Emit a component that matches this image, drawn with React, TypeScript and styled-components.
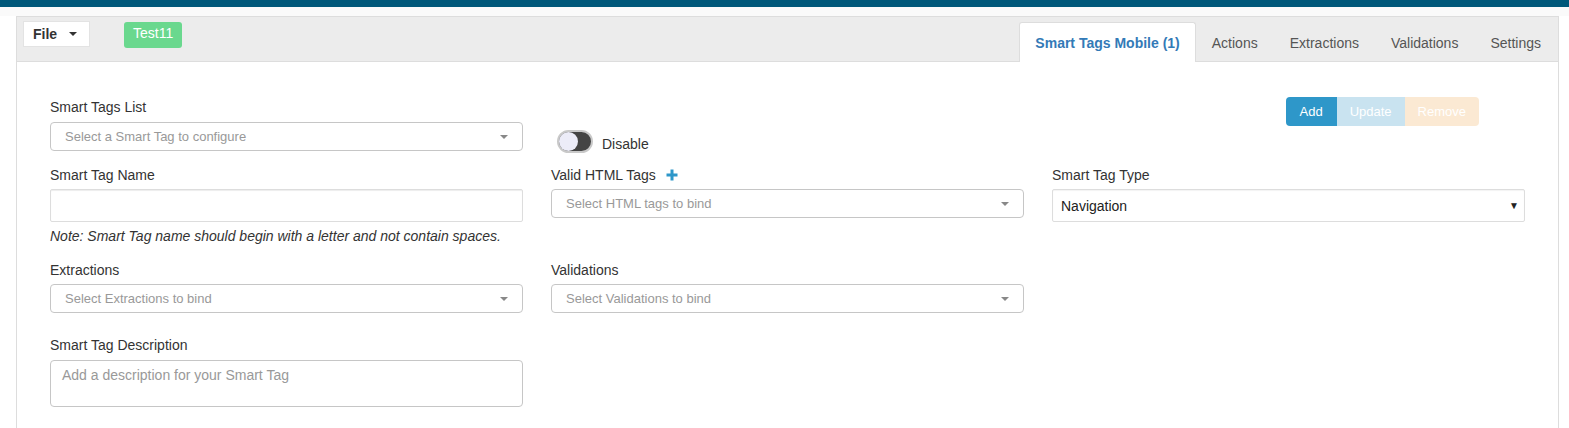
import React from "react";
import styled, { createGlobalStyle } from "styled-components";

const GlobalStyle = createGlobalStyle`
  html, body {
    margin: 0;
    padding: 0;
    background: #fff;
    font-family: "Liberation Sans", Arial, sans-serif;
    font-size: 14px;
    color: #333;
  }
  * {
    box-sizing: border-box;
  }
`;

const TopBar = styled.div`
  height: 7px;
  background: #00587a;
`;

const Strip = styled.div`
  height: 9px;
  background: #fafafa;
`;

const Panel = styled.div`
  margin-left: 16px;
  width: 1543px;
  border: 1px solid #ddd;
  border-bottom: none;
  min-height: 420px;
`;

const Header = styled.div`
  height: 45px;
  background: #ececec;
  border-bottom: 1px solid #ddd;
  display: flex;
  align-items: flex-start;
  padding-left: 6px;
  padding-right: 1px;
`;

const FileButton = styled.div`
  margin-top: 4px;
  width: 67px;
  height: 26px;
  background: #fff;
  border: 1px solid #e3e3e3;
  display: flex;
  align-items: center;
  padding-left: 9px;
  font-weight: bold;
  font-size: 14px;
  color: #333;
`;

const Caret = styled.span`
  margin-left: 12px;
  width: 0;
  height: 0;
  border-left: 4px solid transparent;
  border-right: 4px solid transparent;
  border-top: 4px solid #333;
`;

const Badge = styled.div`
  margin-top: 5px;
  margin-left: 34px;
  height: 26px;
  padding: 2px 9px 0;
  line-height: 18px;
  background: #6ad88e;
  color: #fff;
  border-radius: 3px;
  font-size: 14px;
`;

const Tabs = styled.div`
  margin-left: auto;
  display: flex;
  align-self: flex-end;
  margin-bottom: -1px;
`;

const Tab = styled.div<{ $active?: boolean }>`
  height: 40px;
  padding: 10px 15px;
  line-height: 20px;
  font-size: 14px;
  border: 1px solid ${({ $active }) => ($active ? "#ddd" : "transparent")};
  border-bottom: none;
  background: ${({ $active }) => ($active ? "#fff" : "transparent")};
  color: ${({ $active }) => ($active ? "#337ab7" : "#555")};
  font-weight: ${({ $active }) => ($active ? "bold" : "normal")};
  border-radius: 3px 3px 0 0;
`;

const Body = styled.div`
  padding: 35px 0 0 33px;
`;

const Row = styled.div<{ $top?: number }>`
  display: grid;
  grid-template-columns: 473px 473px 473px;
  column-gap: 28px;
  align-items: start;
  margin-top: ${({ $top }) => $top || 0}px;
`;

const Field = styled.div`
  display: flex;
  flex-direction: column;
`;

const Label = styled.div<{ $gap?: number }>`
  height: 20px;
  line-height: 20px;
  font-size: 14px;
  color: #333;
  margin-bottom: ${({ $gap }) => ($gap === undefined ? 4 : $gap)}px;
  display: flex;
  align-items: center;
`;

const PlusIcon = styled.svg`
  margin-left: 10px;
  width: 12px;
  height: 12px;
`;

const Select2 = styled.div`
  height: 29px;
  border: 1px solid #c6c6c6;
  border-radius: 4px;
  display: flex;
  align-items: center;
  padding: 0 14px 0 14px;
  font-size: 13px;
  color: #999;
  background: #fff;
`;

const Arrow = styled.span`
  margin-left: auto;
  width: 0;
  height: 0;
  border-left: 4px solid transparent;
  border-right: 4px solid transparent;
  border-top: 4px solid #888;
`;

const TextInput = styled.div`
  height: 33px;
  border: 1px solid #ddd;
  border-radius: 2px;
  box-shadow: inset 0 1px 1px rgba(0, 0, 0, 0.075);
  background: #fff;
`;

const NativeSelect = styled.div`
  height: 33px;
  border: 1px solid #ddd;
  border-radius: 2px;
  box-shadow: inset 0 1px 1px rgba(0, 0, 0, 0.05);
  display: flex;
  align-items: center;
  padding: 0 5px 0 8px;
  font-size: 14px;
  color: #222;
  background: #fff;
`;

const SmallTriangle = styled.span`
  margin-left: auto;
  font-size: 10px;
  color: #222;
`;

const Note = styled.div`
  margin-top: 4px;
  line-height: 20px;
  font-style: italic;
  font-size: 14px;
  color: #333;
`;

const TextArea = styled.div`
  height: 47px;
  border: 1px solid #c6c6c6;
  border-radius: 4px;
  padding: 5px 11px;
  line-height: 18px;
  font-size: 14px;
  color: #999;
  background: #fff;
`;

const ToggleWrap = styled.div`
  margin-top: 33px;
  margin-left: 6px;
  display: flex;
  align-items: center;
  gap: 9px;
  font-size: 14px;
  color: #333;

  & > span:last-child {
    margin-top: 4px;
  }
`;

const Switch = styled.span`
  position: relative;
  width: 36px;
  height: 23px;
  border-radius: 12px;
  background: #444;
  border: 2px solid #c9c9c9;

  &::after {
    content: "";
    position: absolute;
    left: 0;
    top: 0;
    width: 19px;
    height: 19px;
    border-radius: 50%;
    background: #ececf8;
  }
`;

const ButtonGroup = styled.div`
  justify-self: end;
  margin-right: 46px;
  display: flex;
`;

const Button = styled.div<{ $bg: string }>`
  height: 29px;
  line-height: 29px;
  padding: 0 13px;
  background: ${({ $bg }) => $bg};
  color: #fff;
  font-size: 13px;

  &:first-child {
    border-radius: 4px 0 0 4px;
    padding: 0 14px;
  }
  &:last-child {
    border-radius: 0 4px 4px 0;
  }
`;

const Empty = styled.div``;

export default function App() {
  return (
    <>
      <GlobalStyle />
      <TopBar />
      <Strip />
      <Panel>
        <Header>
          <FileButton>
            File
            <Caret />
          </FileButton>
          <Badge>Test11</Badge>
          <Tabs>
            <Tab $active>Smart Tags Mobile (1)</Tab>
            <Tab>Actions</Tab>
            <Tab>Extractions</Tab>
            <Tab>Validations</Tab>
            <Tab>Settings</Tab>
          </Tabs>
        </Header>
        <Body>
          <Row>
            <Field>
              <Label $gap={5}>Smart Tags List</Label>
              <Select2>
                Select a Smart Tag to configure
                <Arrow />
              </Select2>
            </Field>
            <ToggleWrap>
              <Switch />
              <span>Disable</span>
            </ToggleWrap>
            <ButtonGroup>
              <Button $bg="#2e97c9">Add</Button>
              <Button $bg="#c9e3f0">Update</Button>
              <Button $bg="#fbe9d3">Remove</Button>
            </ButtonGroup>
          </Row>
          <Row $top={12}>
            <Field>
              <Label>Smart Tag Name</Label>
              <TextInput />
              <Note>Note: Smart Tag name should begin with a letter and not contain spaces.</Note>
            </Field>
            <Field>
              <Label>
                Valid HTML Tags
                <PlusIcon viewBox="0 0 12 12">
                  <path d="M6 0.5V11.5M0.5 6H11.5" stroke="#2e97c9" strokeWidth="3" />
                </PlusIcon>
              </Label>
              <Select2>
                Select HTML tags to bind
                <Arrow />
              </Select2>
            </Field>
            <Field>
              <Label>Smart Tag Type</Label>
              <NativeSelect>
                Navigation
                <SmallTriangle>▼</SmallTriangle>
              </NativeSelect>
            </Field>
          </Row>
          <Row $top={14}>
            <Field>
              <Label>Extractions</Label>
              <Select2>
                Select Extractions to bind
                <Arrow />
              </Select2>
            </Field>
            <Field>
              <Label>Validations</Label>
              <Select2>
                Select Validations to bind
                <Arrow />
              </Select2>
            </Field>
            <Empty />
          </Row>
          <Row $top={22}>
            <Field>
              <Label $gap={5}>Smart Tag Description</Label>
              <TextArea>Add a description for your Smart Tag</TextArea>
            </Field>
          </Row>
        </Body>
      </Panel>
    </>
  );
}
